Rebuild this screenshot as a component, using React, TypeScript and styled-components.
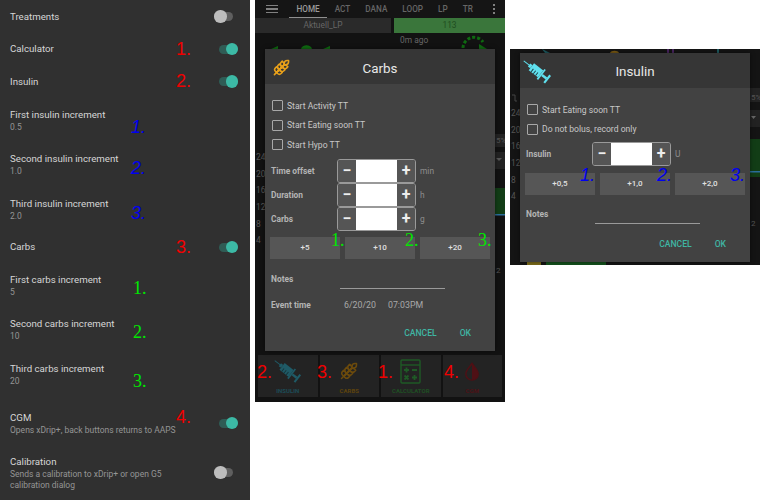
import styled, { createGlobalStyle } from 'styled-components';
import { Wheat } from 'lucide-react';

const GlobalStyle = createGlobalStyle`
  html, body {
    margin: 0;
    background: #fff;
    font-family: Roboto, "Liberation Sans", sans-serif;
  }
`;

type Kind = 'red' | 'blue' | 'green';
type Mark = { n: string; kind: Kind; x: number; y: number };

const COLORS = { red: '#f00000', blue: '#0000f0', green: '#00e800' };

type Setting = {
  title: string;
  sub?: string;
  h: number;
  pt?: number;
  sw?: 'on' | 'off';
  mark?: { n: string; kind: Kind; dy?: number };
};

const SETTINGS: Setting[] = [
  { title: 'Treatments', h: 33, sw: 'off' },
  { title: 'Calculator', h: 32, sw: 'on', mark: { n: '1.', kind: 'red' } },
  { title: 'Insulin', h: 33, sw: 'on', mark: { n: '2.', kind: 'red', dy: -1 } },
  { title: 'First insulin increment', sub: '0.5', h: 44, mark: { n: '1.', kind: 'blue', dy: 7 } },
  { title: 'Second insulin increment', sub: '1.0', h: 45, mark: { n: '2.', kind: 'blue', dy: 3 } },
  { title: 'Third insulin increment', sub: '2.0', h: 44, mark: { n: '3.', kind: 'blue', dy: 4 } },
  { title: 'Carbs', h: 32, sw: 'on', mark: { n: '3.', kind: 'red' } },
  { title: 'First carbs increment', sub: '5', h: 44, mark: { n: '1.', kind: 'green', dy: 3 } },
  { title: 'Second carbs increment', sub: '10', h: 45, mark: { n: '2.', kind: 'green', dy: 2 } },
  { title: 'Third carbs increment', sub: '20', h: 44, mark: { n: '3.', kind: 'green', dy: 7 } },
  { title: 'CGM', sub: 'Opens xDrip+, back buttons returns to AAPS', h: 45, pt: 9, sw: 'on', mark: { n: '4.', kind: 'red', dy: -2 } },
  { title: 'Calibration', sub: 'Sends a calibration to xDrip+ or open G5 calibration dialog', h: 59, pt: 4, sw: 'off' },
];

const SyringeIcon = ({ size, color, dark }: { size: number; color: string; dark: string }) => (
  <svg width={size} height={size} viewBox="0 0 32 32">
    <g transform="rotate(-52 16 16)">
      <rect x="15.5" y="-2" width="1" height="8" fill={color} />
      <rect x="14" y="5" width="4" height="3" fill={color} />
      <rect x="11.5" y="8" width="9" height="12" fill={color} />
      <path d="M11.5 11h4M11.5 14h4M11.5 17h4" stroke={dark} strokeWidth="1" />
      <rect x="9.5" y="20" width="13" height="1.8" fill={color} />
      <rect x="14.7" y="21.8" width="2.6" height="6" fill={color} />
      <rect x="11" y="27.6" width="10" height="2.2" fill={color} />
    </g>
  </svg>
);

const CalculatorIcon = () => (
  <svg width="21" height="25" viewBox="0 0 21 25" fill="none" stroke="#1f5a26" strokeWidth="1.4">
    <rect x="1" y="1" width="19" height="23" rx="1" />
    <path d="M1 6h19" />
    <path d="M4 11h5M6.5 8.5v5M12 11h5M4.5 16.5l4 4M8.5 16.5l-4 4M12 18.5h5M14.5 16v5" strokeWidth="1.8" />
  </svg>
);

const DropIcon = () => (
  <svg width="16" height="19" viewBox="0 0 26 30">
    <path d="M13 2C8 9 3 13 3 19a10 10 0 0 0 20 0C23 13 18 9 13 2Z" fill="none" stroke="#4f1015" strokeWidth="2.4" />
    <path d="M13 2C18 9 23 13 23 19a10 10 0 0 1-10 10Z" fill="#4f1015" />
  </svg>
);

// what shows of the main screen around the Carbs dialog
const CarbsBackdrop = () => (
  <svg width="250" height="402" viewBox="0 0 250 402" fill="none">
    <path d="M16 49l7-3v3ZM46 49c1-5 10-5 11 0ZM68 49l7-3v3Z" fill="#0e6a10" />
    <path d="M208 48a11 11 0 0 1 20-6" stroke="#0e6a10" strokeWidth="3" strokeDasharray="3 2" />
    <path d="M224 44l8 5h-8Z" fill="#0e6a10" />
    <rect x="240" y="134" width="10" height="13" fill="#232323" />
    <text x="241" y="143" fontSize="8" fill="#555" fontFamily="Roboto">5%</text>
    <rect x="240" y="152" width="10" height="17" fill="#222" />
    <path d="M241 158l6 0-3 3Z" fill="#555" />
    <rect x="240" y="188" width="10" height="26" fill="#123d16" />
    <rect x="240" y="214" width="10" height="1.5" fill="#2a6d9a" />
    <text x="241" y="273" fontSize="8" fill="#555" fontFamily="Roboto">2</text>
  </svg>
);

// the same for the Insulin dialog
const InsulinBackdrop = () => (
  <svg width="250" height="216" viewBox="0 0 250 216" fill="none">
    <path d="M32 0l8 4h-5Z" fill="#1d5a60" />
    <path d="M100 4c1-3 8-3 9 0Z" fill="#7a5a14" />
    <path d="M158 0v4M163 0v4" stroke="#5a2a78" strokeWidth="1.5" />
    <path d="M208 0v4" stroke="#1d5a60" strokeWidth="2" />
    <path d="M2 46h3v6h2" stroke="#444" />
    <rect x="240" y="39" width="10" height="14" fill="#232323" />
    <text x="241" y="51" fontSize="8" fill="#555" fontFamily="Roboto">5%</text>
    <rect x="240" y="61" width="10" height="17" fill="#222" />
    <path d="M241 67l5 0-2.5 3Z" fill="#666" />
    <rect x="240" y="90" width="10" height="38" fill="#123d16" />
    <rect x="240" y="122" width="10" height="1.5" fill="#2a6d9a" />
    <text x="241" y="177" fontSize="8" fill="#555" fontFamily="Roboto">2</text>
    <rect x="17" y="213" width="14" height="3" fill="#7a6a1a" />
    <rect x="36" y="213" width="60" height="3" fill="#14501c" />
  </svg>
);

const Annotation = ({ mark }: { mark: Mark }) => (
  <Note $kind={mark.kind} $x={mark.x} $y={mark.y}>{mark.n}</Note>
);

const Stepper = ({ label, unit }: { label: string; unit: string }) => (
  <StepRow>
    <FieldLabel>{label}</FieldLabel>
    <StepBox>
      <StepBtn>&minus;</StepBtn>
      <StepInput />
      <StepBtn>+</StepBtn>
    </StepBox>
    <Unit>{unit}</Unit>
  </StepRow>
);

const Actions = ({ top }: { top: number }) => (
  <ActionRow $top={top}>
    <ActionBtn>CANCEL</ActionBtn>
    <ActionBtn>OK</ActionBtn>
  </ActionRow>
);

export default function App() {
  return (
    <>
      <GlobalStyle />
      <Page>
        <Settings>
          {SETTINGS.map((s) => (
            <SettingRow key={s.title} $h={s.h} $pt={s.pt ?? 0}>
              <SettingText>
                <SettingTitle>{s.title}</SettingTitle>
                {s.sub && <SettingSub>{s.sub}</SettingSub>}
              </SettingText>
              {s.sw && <Toggle $on={s.sw === 'on'} />}
              {s.mark && (
                <RowMark $kind={s.mark.kind} $dy={s.mark.dy ?? 0}>{s.mark.n}</RowMark>
              )}
            </SettingRow>
          ))}
        </Settings>

        <Phone>
          <Backdrop><CarbsBackdrop /></Backdrop>
          <TopBar>
            <Burger><i /><i /><i /></Burger>
            <Tab $active>HOME</Tab>
            <Tab>ACT</Tab>
            <Tab>DANA</Tab>
            <Tab>LOOP</Tab>
            <Tab>LP</Tab>
            <Tab>TR</Tab>
            <Dots><i /><i /><i /></Dots>
          </TopBar>
          <ProfileRow>
            <ProfileCell>Aktuell_LP</ProfileCell>
            <TargetCell>113</TargetCell>
          </ProfileRow>
          <AgoText>0m ago</AgoText>
          <Axis $top={152}>
            {[24, 20, 16, 12, 8, 4].map((n) => <span key={n}>{n}</span>)}
          </Axis>
          <Spacer />
          <BottomRow>
            <BottomBtn>
              <BottomIcon><SyringeIcon size={30} color="#1f5a66" dark="#17343a" /></BottomIcon>
              <BottomLabel $color="#1d4c57">INSULIN</BottomLabel>
            </BottomBtn>
            <BottomBtn>
              <BottomIcon><Wheat size={18} color="#6b4a0c" strokeWidth={2} /></BottomIcon>
              <BottomLabel $color="#5e430d">CARBS</BottomLabel>
            </BottomBtn>
            <BottomBtn>
              <BottomIcon><CalculatorIcon /></BottomIcon>
              <BottomLabel $color="#1f4f24">CALCULATOR</BottomLabel>
            </BottomBtn>
            <BottomBtn>
              <BottomIcon><DropIcon /></BottomIcon>
              <BottomLabel $color="#4d1216">CGM</BottomLabel>
            </BottomBtn>
          </BottomRow>

          <Dialog $top={49} $left={10} $h={302}>
            <DialogHeader $pt={3}>
              <HeaderIcon $left={8}><Wheat size={17} color="#e9a11a" strokeWidth={2.2} /></HeaderIcon>
              <DialogTitle>Carbs</DialogTitle>
            </DialogHeader>
            <DialogBody>
              <CheckRow><Check />Start Activity TT</CheckRow>
              <CheckRow><Check />Start Eating soon TT</CheckRow>
              <CheckRow><Check />Start Hypo TT</CheckRow>
              <Steppers $top={4}>
                <Stepper label="Time offset" unit="min" />
                <Stepper label="Duration" unit="h" />
                <Stepper label="Carbs" unit="g" />
              </Steppers>
              <QuickRow $top={6}>
                <QuickBtn>+5</QuickBtn>
                <QuickBtn>+10</QuickBtn>
                <QuickBtn>+20</QuickBtn>
              </QuickRow>
              <NotesRow $top={5}>
                <FieldLabel>Notes</FieldLabel>
                <NotesLine />
              </NotesRow>
              <EventRow>
                <FieldLabel>Event time</FieldLabel>
                <EventValue>6/20/20</EventValue>
                <EventValue>07:03PM</EventValue>
              </EventRow>
              <Actions top={16} />
            </DialogBody>
          </Dialog>

          <Annotation mark={{ n: '2.', kind: 'red', x: 2, y: 361 }} />
          <Annotation mark={{ n: '3.', kind: 'red', x: 62, y: 361 }} />
          <Annotation mark={{ n: '1.', kind: 'red', x: 123, y: 361 }} />
          <Annotation mark={{ n: '4.', kind: 'red', x: 189, y: 361 }} />
          <Annotation mark={{ n: '1.', kind: 'green', x: 76, y: 229 }} />
          <Annotation mark={{ n: '2.', kind: 'green', x: 150, y: 229 }} />
          <Annotation mark={{ n: '3.', kind: 'green', x: 223, y: 229 }} />
        </Phone>

        <SmallPhone>
          <Backdrop><InsulinBackdrop /></Backdrop>
          <Axis $top={59}>
            {[24, 20, 16, 12, 8, 4].map((n) => <span key={n}>{n}</span>)}
          </Axis>
          <Dialog $top={4} $left={10} $h={209}>
            <DialogHeader $pt={1}>
              <HeaderIcon $left={2}>
                <SyringeIcon size={31} color="#5fe0ee" dark="#1c3c44" />
              </HeaderIcon>
              <DialogTitle>Insulin</DialogTitle>
            </DialogHeader>
            <DialogBody>
              <CheckRow><Check />Start Eating soon TT</CheckRow>
              <CheckRow><Check />Do not bolus, record only</CheckRow>
              <Steppers $top={3}>
                <Stepper label="Insulin" unit="U" />
              </Steppers>
              <QuickRow $top={7}>
                <QuickBtn>+0,5</QuickBtn>
                <QuickBtn>+1,0</QuickBtn>
                <QuickBtn>+2,0</QuickBtn>
              </QuickRow>
              <NotesRow $top={4}>
                <FieldLabel>Notes</FieldLabel>
                <NotesLine />
              </NotesRow>
              <Actions top={11} />
            </DialogBody>
          </Dialog>
          <Annotation mark={{ n: '1.', kind: 'blue', x: 70, y: 115 }} />
          <Annotation mark={{ n: '2.', kind: 'blue', x: 147, y: 115 }} />
          <Annotation mark={{ n: '3.', kind: 'blue', x: 220, y: 115 }} />
        </SmallPhone>
      </Page>
    </>
  );
}

const Page = styled.div`
  display: flex;
  align-items: flex-start;
  gap: 5px;
  width: 760px;
  height: 500px;
  overflow: hidden;
`;
const Settings = styled.div`
  width: 250px;
  height: 500px;
  flex: none;
  background: #303030;
`;
const SettingRow = styled.div<{ $h: number; $pt: number }>`
  position: relative;
  height: ${(p) => p.$h}px;
  display: flex;
  align-items: center;
  padding: ${(p) => p.$pt}px 12px 0 10px;
  box-sizing: border-box;
`;
const SettingText = styled.div`
  width: 172px;
  flex: none;
`;
const SettingTitle = styled.div`
  font-size: 9.7px;
  line-height: 14px;
  color: #d6d6d6;
`;
const SettingSub = styled.div`
  font-size: 8.5px;
  line-height: 10.5px;
  color: #959595;
`;
const Toggle = styled.div<{ $on: boolean }>`
  position: relative;
  margin-left: auto;
  margin-right: ${(p) => (p.$on ? 0 : 5)}px;
  width: 19px;
  height: 9px;
  border-radius: 5px;
  background: ${(p) => (p.$on ? '#2f5c55' : '#5f5f5f')};
  &::after {
    content: '';
    position: absolute;
    top: -2px;
    ${(p) => (p.$on ? 'right: 0;' : 'left: 0;')}
    width: 12.5px;
    height: 12.5px;
    border-radius: 50%;
    background: ${(p) => (p.$on ? '#3cb9a5' : '#bdbdbd')};
  }
`;
const noteFont = {
  red: '"Liberation Sans", sans-serif',
  blue: '"Liberation Sans", sans-serif',
  green: '"Liberation Serif", serif',
};
const markLeft = { red: 176, blue: 131, green: 133 };
const RowMark = styled.span<{ $kind: Kind; $dy: number }>`
  position: absolute;
  left: ${(p) => markLeft[p.$kind]}px;
  top: 50%;
  margin-top: ${(p) => p.$dy - 11}px;
  font-family: ${(p) => noteFont[p.$kind]};
  font-style: ${(p) => (p.$kind === 'blue' ? 'italic' : 'normal')};
  font-size: 18px;
  line-height: 22px;
  color: ${(p) => COLORS[p.$kind]};
`;
const Note = styled.span<{ $kind: Kind; $x: number; $y: number }>`
  position: absolute;
  left: ${(p) => p.$x}px;
  top: ${(p) => p.$y}px;
  font-family: ${(p) => noteFont[p.$kind]};
  font-style: ${(p) => (p.$kind === 'blue' ? 'italic' : 'normal')};
  font-size: 18px;
  line-height: 22px;
  color: ${(p) => COLORS[p.$kind]};
`;
const Phone = styled.div`
  position: relative;
  width: 250px;
  height: 402px;
  flex: none;
  background: #121212;
  display: flex;
  flex-direction: column;
`;
const SmallPhone = styled.div`
  position: relative;
  width: 250px;
  height: 216px;
  flex: none;
  margin-top: 49px;
  background: #141414;
  overflow: hidden;
`;
const Backdrop = styled.div`
  position: absolute;
  inset: 0;
  svg {
    display: block;
  }
`;
const TopBar = styled.div`
  position: relative;
  height: 18px;
  display: flex;
  align-items: center;
  background: #151515;
  flex: none;
`;
const Burger = styled.div`
  width: 12px;
  margin: 0 11px 0 11px;
  display: flex;
  flex-direction: column;
  gap: 2px;
  i {
    height: 1.4px;
    background: #808080;
  }
`;
const Tab = styled.div<{ $active?: boolean }>`
  height: 18px;
  box-sizing: border-box;
  line-height: 18px;
  padding: 0 7.5px;
  font-size: 8.2px;
  font-weight: 500;
  color: ${(p) => (p.$active ? '#9a9a9a' : '#666')};
  border-bottom: ${(p) => (p.$active ? '1px solid #8f8f8f' : 'none')};
`;
const Dots = styled.div`
  margin-left: auto;
  margin-right: 10px;
  display: flex;
  flex-direction: column;
  gap: 2px;
  i {
    width: 2px;
    height: 2px;
    background: #808080;
  }
`;
const ProfileRow = styled.div`
  position: relative;
  height: 15px;
  display: flex;
  gap: 3px;
  flex: none;
`;
const ProfileCell = styled.div`
  width: 136px;
  background: #2a2a2a;
  color: #666;
  font-size: 8.4px;
  line-height: 15px;
  text-align: center;
`;
const TargetCell = styled.div`
  flex: 1;
  background: #3a763b;
  color: #1f4d20;
  font-size: 8.4px;
  line-height: 15px;
  text-align: center;
`;
const AgoText = styled.div`
  position: relative;
  padding-left: 145px;
  font-size: 8.4px;
  line-height: 11px;
  margin-top: 2px;
  color: #666;
`;
const Axis = styled.div<{ $top: number }>`
  position: absolute;
  left: 1px;
  top: ${(p) => p.$top}px;
  display: flex;
  flex-direction: column;
  gap: 6.7px;
  font-size: 8.4px;
  line-height: 10px;
  color: #555;
`;
const Spacer = styled.div`
  flex: 1;
`;
const BottomRow = styled.div`
  position: relative;
  display: flex;
  gap: 2px;
  padding: 0 3px 5px;
`;
const BottomBtn = styled.div`
  flex: 1;
  height: 42px;
  background: #232323;
  display: flex;
  flex-direction: column;
  align-items: center;
  padding-bottom: 2px;
  box-sizing: border-box;
`;
const BottomIcon = styled.div`
  flex: 1;
  display: flex;
  align-items: center;
  justify-content: center;
`;
const BottomLabel = styled.div<{ $color: string }>`
  font-size: 6px;
  font-weight: 700;
  line-height: 8px;
  color: ${(p) => p.$color};
`;
const Dialog = styled.div<{ $top: number; $left: number; $h: number }>`
  position: absolute;
  top: ${(p) => p.$top}px;
  left: ${(p) => p.$left}px;
  width: 230px;
  height: ${(p) => p.$h}px;
  background: #424242;
  box-shadow: 0 0 4px rgba(0, 0, 0, 0.5);
`;
const DialogHeader = styled.div<{ $pt: number }>`
  position: relative;
  height: 35px;
  box-sizing: border-box;
  padding-top: ${(p) => p.$pt}px;
  background: #363636;
  display: flex;
  align-items: center;
  justify-content: center;
`;
const HeaderIcon = styled.div<{ $left: number }>`
  position: absolute;
  left: ${(p) => p.$left}px;
  top: 2px;
  bottom: 0;
  display: flex;
  align-items: center;
`;
const DialogTitle = styled.div`
  font-size: 13.4px;
  color: #e8e8e8;
`;
const DialogBody = styled.div`
  padding: 12px 5px 0 6px;
`;
const CheckRow = styled.div`
  height: 19.5px;
  display: flex;
  align-items: center;
  gap: 4px;
  padding-left: 1px;
  font-size: 8.6px;
  color: #c8c8c8;
`;
const Check = styled.span`
  width: 9px;
  height: 9px;
  border: 1px solid #a8a8a8;
  border-radius: 1px;
`;
const Steppers = styled.div<{ $top: number }>`
  margin-top: ${(p) => p.$top}px;
`;
const StepRow = styled.div`
  display: flex;
  align-items: center;
  height: 24.3px;
`;
const FieldLabel = styled.div`
  width: 66px;
  flex: none;
  font-size: 8.4px;
  font-weight: 700;
  color: #b4b4b4;
`;
const StepBox = styled.div`
  width: 79px;
  height: 24.3px;
  box-sizing: border-box;
  display: flex;
  border: 1px solid #9a9a9a;
  border-radius: 3px;
  overflow: hidden;
`;
const StepBtn = styled.div`
  width: 18px;
  flex: none;
  background: #555;
  color: #eee;
  font-size: 16px;
  font-weight: 700;
  line-height: 21px;
  text-align: center;
`;
const StepInput = styled.div`
  flex: 1;
  background: #fff;
`;
const Unit = styled.div`
  margin-left: 4px;
  font-size: 8.4px;
  color: #8e8e8e;
`;
const QuickRow = styled.div<{ $top: number }>`
  display: flex;
  gap: 5px;
  margin: ${(p) => p.$top}px 0 0 -1px;
`;
const QuickBtn = styled.div`
  width: 70px;
  height: 22px;
  background: #565656;
  color: #e0e0e0;
  font-size: 8px;
  font-weight: 500;
  line-height: 22px;
  text-align: center;
`;
const NotesRow = styled.div<{ $top: number }>`
  display: flex;
  height: 29px;
  align-items: center;
  margin-top: ${(p) => p.$top}px;
`;
const NotesLine = styled.div`
  width: 105px;
  height: 1px;
  margin: 20px 0 0 3px;
  background: #9a9a9a;
`;
const EventRow = styled.div`
  display: flex;
  align-items: center;
  height: 14px;
  margin-top: 5px;
`;
const EventValue = styled.div`
  margin: 0 5px 0 7px;
  font-size: 8.8px;
  color: #a8a8a8;
`;
const ActionRow = styled.div<{ $top: number }>`
  display: flex;
  justify-content: flex-end;
  gap: 23px;
  padding: ${(p) => p.$top}px 19px 0 0;
`;
const ActionBtn = styled.div`
  font-size: 8.6px;
  font-weight: 500;
  color: #3fb5a2;
`;
